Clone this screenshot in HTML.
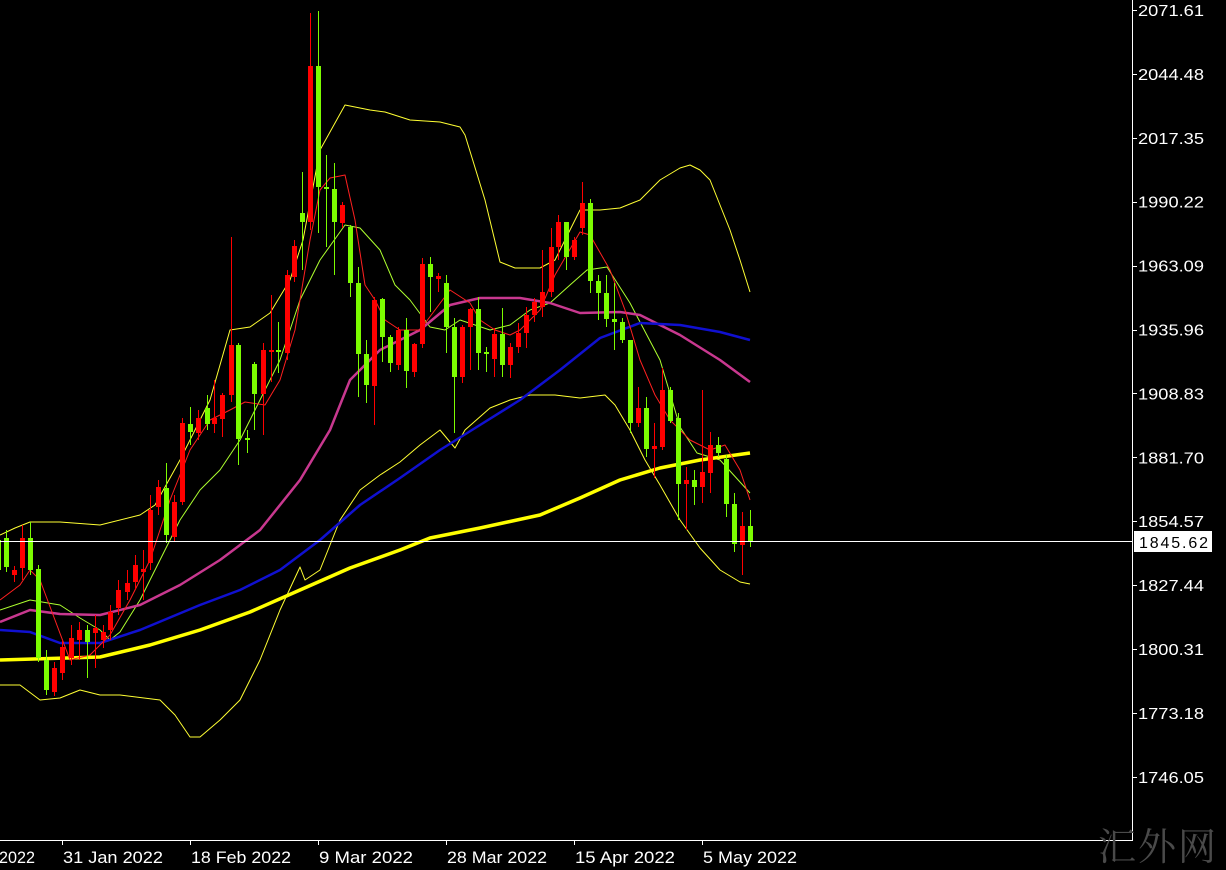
<!DOCTYPE html>
<html><head><meta charset="utf-8"><style>
html,body{margin:0;padding:0;background:#000;width:1226px;height:870px;overflow:hidden}
svg{display:block}
text{font-family:"Liberation Sans","Noto Sans CJK SC",sans-serif;fill:#fff}
</style></head><body>
<svg id="s" width="1226" height="870" xmlns="http://www.w3.org/2000/svg">
<rect width="1226" height="870" fill="#000"/>
<g id="lines"></g>
<g id="candles"></g>
<line x1="0" y1="541.5" x2="1132" y2="541.5" stroke="#fff" stroke-width="1"/>
<line x1="1132.5" y1="0" x2="1132.5" y2="840" stroke="#fff" stroke-width="1"/>
<line x1="0" y1="840.5" x2="1133" y2="840.5" stroke="#fff" stroke-width="1"/>
<g id="axis"></g>
<rect x="1134" y="531" width="78" height="21" fill="#fff"/>
<text x="1139" y="548" font-size="16" textLength="69" style="fill:#000">1845.62</text>
<text x="1098" y="860" font-size="38" textLength="118" style="fill:#4a4a4a;font-family:'Noto Serif CJK SC','Noto Sans CJK SC',serif">汇外网</text>
</svg>
<script>
var NS="http://www.w3.org/2000/svg";
function el(p,t,a){var e=document.createElementNS(NS,t);for(var k in a)e.setAttribute(k,a[k]);p.appendChild(e);return e;}
var L=document.getElementById('lines'),C=document.getElementById('candles'),A=document.getElementById('axis');
function pl(pts,col,w){el(L,'polyline',{points:pts.map(function(p){return p.join(',')}).join(' '),fill:'none',stroke:col,'stroke-width':w,'stroke-linejoin':'round'});}
// Bollinger upper
pl([[0,535],[15,528],[30,522],[60,522],[100,525],[140,515],[155,505],[180,460],[210,400],[230,330],[250,327],[270,313],[290,280],[303,240],[320,150],[345,105],[370,110],[385,112],[410,120],[440,122],[460,127],[465,135],[485,200],[500,262],[515,268],[540,268],[555,260],[580,210],[600,210],[620,208],[640,200],[660,180],[680,168],[690,165],[700,170],[710,180],[730,230],[740,260],[750,292]],'#ffff33',1);
pl([[0,685],[20,685],[40,700],[60,698],[80,690],[100,695],[120,695],[160,700],[175,715],[190,737],[200,737],[220,720],[240,700],[260,660],[280,610],[300,567],[305,580],[320,570],[340,520],[360,490],[380,475],[400,462],[420,445],[440,430],[455,448],[465,430],[490,408],[510,400],[530,395],[555,395],[580,398],[605,395],[615,405],[630,430],[645,460],[660,485],[680,520],[700,548],[720,570],[740,582],[750,584]],'#ffff33',1);
pl([[0,610],[30,600],[60,605],[80,618],[100,630],[110,640],[120,632],[140,600],[160,560],[180,520],[200,490],[220,470],[240,440],[260,400],[280,360],[300,300],[320,260],[345,225],[360,228],[380,250],[395,285],[410,300],[430,327],[445,330],[460,320],[475,325],[490,330],[510,325],[530,310],[550,303],[570,285],[587,270],[607,267],[630,303],[660,360],[680,427],[697,453],[720,460],[750,493]],'#adff2f',1);
pl([[0,622],[30,610],[60,614],[100,615],[140,605],[180,585],[220,560],[260,530],[300,480],[330,430],[350,380],[380,350],[420,330],[450,305],[480,298],[520,298],[550,303],[580,313],[620,312],[640,315],[680,335],[720,360],[750,382]],'#c8388f',2.5);
pl([[0,630],[30,632],[60,643],[100,643],[140,630],[200,605],[240,590],[280,570],[320,540],[360,505],[400,478],[440,450],[480,425],[520,400],[560,370],[600,338],[640,323],[680,325],[720,332],[750,340]],'#1010d0',2.5);
pl([[0,660],[100,657],[150,645],[200,630],[250,612],[300,590],[350,568],[400,550],[430,538],[480,528],[540,515],[580,498],[620,480],[660,468],[700,460],[750,453]],'#ffff00',3.5);
pl([[0,600],[20,585],[30,570],[40,580],[55,620],[70,660],[90,655],[110,635],[130,600],[150,560],[170,500],[190,450],[210,420],[230,410],[245,402],[265,405],[280,380],[295,330],[310,240],[320,190],[330,178],[345,175],[355,220],[365,285],[375,300],[385,320],[400,330],[420,330],[435,310],[450,290],[470,303],[480,320],[495,330],[510,335],[520,330],[540,310],[555,275],[580,232],[590,235],[610,270],[625,310],[640,360],[655,395],[670,420],[690,440],[710,450],[725,445],[740,470],[750,500]],'#ff2020',1);
var G='#7cfc00',R='#ff0000';
var d=[
[-2,G,535,540,570,575],[6,G,530,538,567,572],[14,R,566,570,575,582],[22,R,525,538,568,580],[30,G,522,538,570,575],
[38,G,565,569,658,662],[46,G,650,660,690,695],[54,R,662,668,692,696],[62,R,640,647,673,680],[71,R,625,638,658,665],
[79,R,622,630,640,660],[87,G,625,630,642,678],[95,R,615,628,633,668],[103,R,625,632,640,648],[110,R,605,612,630,640],
[118,R,580,590,608,615],[127,R,570,583,592,600],[135,R,555,565,582,590],[143,R,550,569,572,600],[150,R,495,510,563,570],
[158,R,480,487,507,515],[166,G,463,488,535,543],[174,R,495,502,537,542],[182,R,418,423,502,505],[190,G,407,424,432,445],
[198,R,410,418,433,440],[207,G,395,408,424,430],[214,R,380,418,424,433],[222,R,393,395,419,437],[231,R,237,345,395,402],
[238,G,343,345,439,465],[247,G,430,438,440,453],[254,G,362,364,394,430],[263,R,343,350,394,435],[271,R,295,350,352,382],
[278,G,322,350,352,373],[287,R,270,275,353,360],[294,R,240,246,277,282],[302,G,172,213,222,270],[310,R,13,66,222,230],
[318,G,11,66,187,233],[326,G,155,187,189,247],[334,G,163,189,222,275],[342,R,202,205,223,228],[350,G,225,227,283,297],
[358,G,267,283,354,397],[366,G,340,354,385,403],[374,R,297,300,386,425],[382,G,298,299,337,362],[390,G,335,337,363,372],
[398,R,327,330,365,370],[406,G,318,330,371,388],[414,R,343,344,372,377],[422,R,258,264,344,348],[430,G,257,264,277,312],
[438,R,273,276,279,292],[446,G,275,283,327,353],[454,G,318,327,377,433],[462,R,325,327,377,383],[470,R,308,309,327,370],
[478,G,297,309,353,370],[486,G,347,352,354,372],[494,R,328,334,359,377],[502,G,308,334,365,377],[510,R,343,347,365,378],
[518,R,323,333,347,353],[526,R,307,315,333,348],[534,R,298,302,315,322],[542,R,250,292,307,317],[551,R,228,247,292,297],
[558,R,215,222,247,260],[566,G,222,222,257,270],[574,R,237,240,257,260],[582,R,182,203,228,235],[590,G,199,203,281,293],
[598,G,275,281,293,320],[606,G,275,293,319,327],[614,G,283,319,322,350],[622,G,318,322,340,343],[630,G,340,340,423,433],
[638,R,387,408,423,427],[646,G,397,408,449,457],[654,R,423,446,449,478],[662,R,368,390,447,450],[670,G,387,390,421,423],
[678,G,413,418,484,520],[686,R,467,480,484,530],[694,G,470,480,487,505],[702,R,390,472,487,503],[710,R,432,445,473,493],
[718,G,437,445,453,457],[726,G,455,459,504,517],[734,G,493,504,544,552],[742,R,512,526,545,575],[750,G,510,526,542,547]
];
d.forEach(function(c){
 el(C,'line',{x1:c[0]+.5,x2:c[0]+.5,y1:c[2],y2:c[5],stroke:c[1],'stroke-width':1});
 var h=Math.max(1.5,c[4]-c[3]);
 el(C,'rect',{x:c[0]-2,y:c[3],width:5,height:h,fill:c[1]});
});
var labs=['2071.61','2044.48','2017.35','1990.22','1963.09','1935.96','1908.83','1881.70','1854.57','1827.44','1800.31','1773.18','1746.05'];
labs.forEach(function(t,i){var y=10+i*63.9;
 el(A,'line',{x1:1132,x2:1137,y1:Math.round(y)+.5,y2:Math.round(y)+.5,stroke:'#fff'});
 var tx=el(A,'text',{x:1138,y:y+6,'font-size':16,textLength:66,lengthAdjust:'spacingAndGlyphs'});tx.textContent=t;});
var dl=[[62,'31 Jan 2022'],[190,'18 Feb 2022'],[318,'9 Mar 2022'],[446,'28 Mar 2022'],[574,'15 Apr 2022'],[702,'5 May 2022']];
var t0=el(A,'text',{x:-1,y:863,'font-size':17,textLength:36,lengthAdjust:'spacingAndGlyphs'});t0.textContent='2022';
dl.forEach(function(p){
 el(A,'line',{x1:p[0]+.5,x2:p[0]+.5,y1:840,y2:845,stroke:'#fff'});
 var w=p[1].length==11?100:94;
 var tx=el(A,'text',{x:p[0]+1,y:863,'font-size':17,textLength:w,lengthAdjust:'spacingAndGlyphs'});tx.textContent=p[1];});
</script>
</body></html>
